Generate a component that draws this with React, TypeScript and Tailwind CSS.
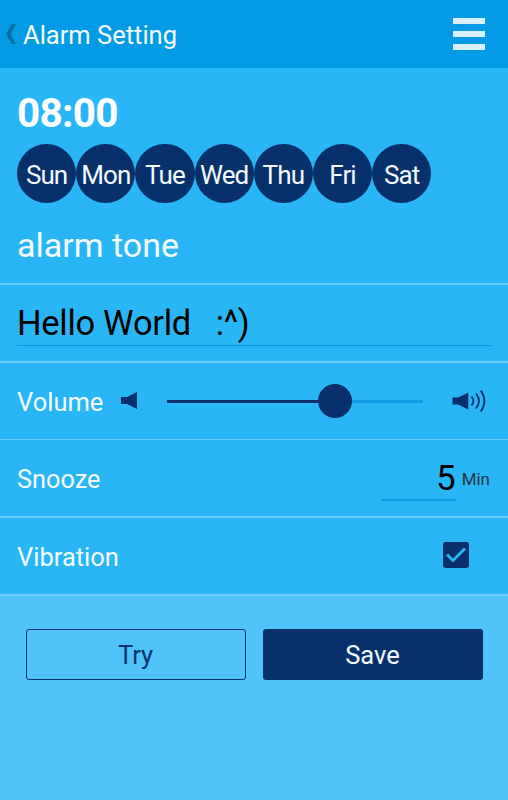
import React, { useState } from 'react';

const DAYS = ['Sun', 'Mon', 'Tue', 'Wed', 'Thu', 'Fri', 'Sat'];

function Header() {
  return (
    <header className="flex h-[68px] items-center justify-between bg-[#039be5] pr-[23.5px] pl-[6px]">
      <div className="flex items-center gap-[7px] pt-[1px]">
        <svg width="10" height="20" viewBox="0 0 10 20" className="-mt-[1px]" aria-hidden="true">
          <path d="M5.600 0H9.800L4.600 10l5.200 10H5.600L0 10z" fill="#0272a6" />
        </svg>
        <h1 className="text-[25.5px] leading-[30px] text-[#f4fbff]">Alarm Setting</h1>
      </div>
      <button type="button" aria-label="Menu" className="flex w-[31.5px] flex-col gap-[7px]">
        <span className="h-[6px] w-full bg-[#d9f0fb]" />
        <span className="h-[6px] w-full bg-[#d9f0fb]" />
        <span className="h-[6px] w-full bg-[#d9f0fb]" />
      </button>
    </header>
  );
}

function SpeakerLow() {
  return (
    <svg width="17" height="18" viewBox="0 0 17 18" aria-hidden="true">
      <path d="M0 5h6L16 0v17L6 12H0z" fill="#08306b" />
    </svg>
  );
}

function SpeakerHigh() {
  return (
    <svg width="34" height="24" viewBox="0 0 34 24" aria-hidden="true">
      <path d="M.5 8.500H6L16.300 3.500v17L6 15.500H.5z" fill="#08306b" />
      <g fill="none" stroke="#08306b" strokeWidth="1.8">
        <path d="M19.500 7.500Q23.300 12 19.500 16.500" />
        <path d="M24 4.500Q30 12 24 19.500" />
        <path d="M28.800 1.500Q36 12 28.800 22.500" />
      </g>
    </svg>
  );
}

export default function App() {
  const [selectedDays, setSelectedDays] = useState<Set<string>>(new Set(DAYS));
  const [vibration, setVibration] = useState(true);

  const handleToggleDay = (day: string) => {
    setSelectedDays((prev) => {
      const next = new Set(prev);
      if (next.has(day)) {
        next.delete(day);
      } else {
        next.add(day);
      }
      return next;
    });
  };

  return (
    <div className="flex h-[800px] w-[508px] flex-col overflow-hidden bg-[#4fc3f7] font-[Roboto,sans-serif] text-[#f4fbff]">
      <Header />
      <main className="bg-[#29b6f6]">
        <section className="h-[217px] border-b-2 border-[#6acdf9] px-[17px] pt-[20px]">
          <p className="text-[40.5px] leading-[50px] font-bold tracking-[-0.7px] text-white">08:00</p>
          <div className="mt-[6px] flex">
            {DAYS.map((day) => (
              <button
                key={day}
                type="button"
                onClick={() => handleToggleDay(day)}
                className={`flex h-[59.2px] w-[59.2px] items-center justify-center rounded-full pt-[3px] text-[26px] tracking-[-0.9px]
                  ${selectedDays.has(day) ? 'bg-[#08306b]' : 'bg-transparent'}
                  `}
              >
                {day}
              </button>
            ))}
          </div>
          <h2 className="mt-[22px] text-[34px] leading-[40px]">alarm tone</h2>
        </section>

        <section className="h-[78px] border-b-2 border-[#6acdf9] px-[17px] pt-[17px]">
          <p className="h-[44px] border-b border-[#0b95dc] text-[34.5px] leading-[42px] tracking-[-0.3px] whitespace-pre text-black">
            {'Hello World   :^)'}
          </p>
        </section>

        <section className="flex h-[77px] items-center border-b border-[#6acdf9] pl-[17px]">
          <span className="w-[104px] pt-[2px] text-[25.5px]">Volume</span>
          <SpeakerLow />
          <div className="ml-[28.5px] flex w-[256px] items-center">
            <span className="h-[3px] w-[151px] bg-[#08306b]" />
            <span className="size-[34px] rounded-full bg-[#08306b]" />
            <span className="h-[3px] flex-1 bg-[#109ce5]" />
          </div>
          <div className="ml-[29.5px]">
            <SpeakerHigh />
          </div>
        </section>

        <section className="flex h-[78px] justify-between border-b-2 border-[#6acdf9] pr-[18px] pl-[17px]">
          <span className="pt-[25px] text-[25.3px] leading-[30px]">Snooze</span>
          <div className="flex gap-[6px]">
            <span className="mt-[17px] h-[44px] w-[75px] border-b-2 border-[#109ce5] text-right text-[35px] leading-[44px] text-black">
              5
            </span>
            <span className="pt-[28px] text-[17px] leading-[22px] text-[#27333a]">Min</span>
          </div>
        </section>

        <section className="flex h-[78px] items-center justify-between border-b-2 border-[#6acdf9] pr-[39.500px] pl-[17px]">
          <span className="pt-[3px] text-[25.500px]">Vibration</span>
          <button
            type="button"
            role="checkbox"
            aria-checked={vibration}
            aria-label="Vibration"
            onClick={() => setVibration(!vibration)}
            className="-mt-[2px] flex size-[26px] items-center justify-center rounded-[3px] bg-[#08306b]"
          >
            {vibration && (
              <svg width="26" height="26" viewBox="0 0 26 26" fill="none" aria-hidden="true">
                <path d="M4 12.500l6 6L22 6.500" stroke="#29b6f6" strokeWidth="2.800" />
              </svg>
            )}
          </button>
        </section>
      </main>

      <footer className="grid grid-cols-2 gap-[17px] px-[25.5px] pt-[33px] text-[25.500px]">
        <button type="button" className="h-[51px] rounded-[3px] border border-[#08306b] pt-[2px] text-[#08306b]">
          Try
        </button>
        <button type="button" className="h-[51px] rounded-[3px] bg-[#08306b] pt-[2px]">
          Save
        </button>
      </footer>
    </div>
  );
}
